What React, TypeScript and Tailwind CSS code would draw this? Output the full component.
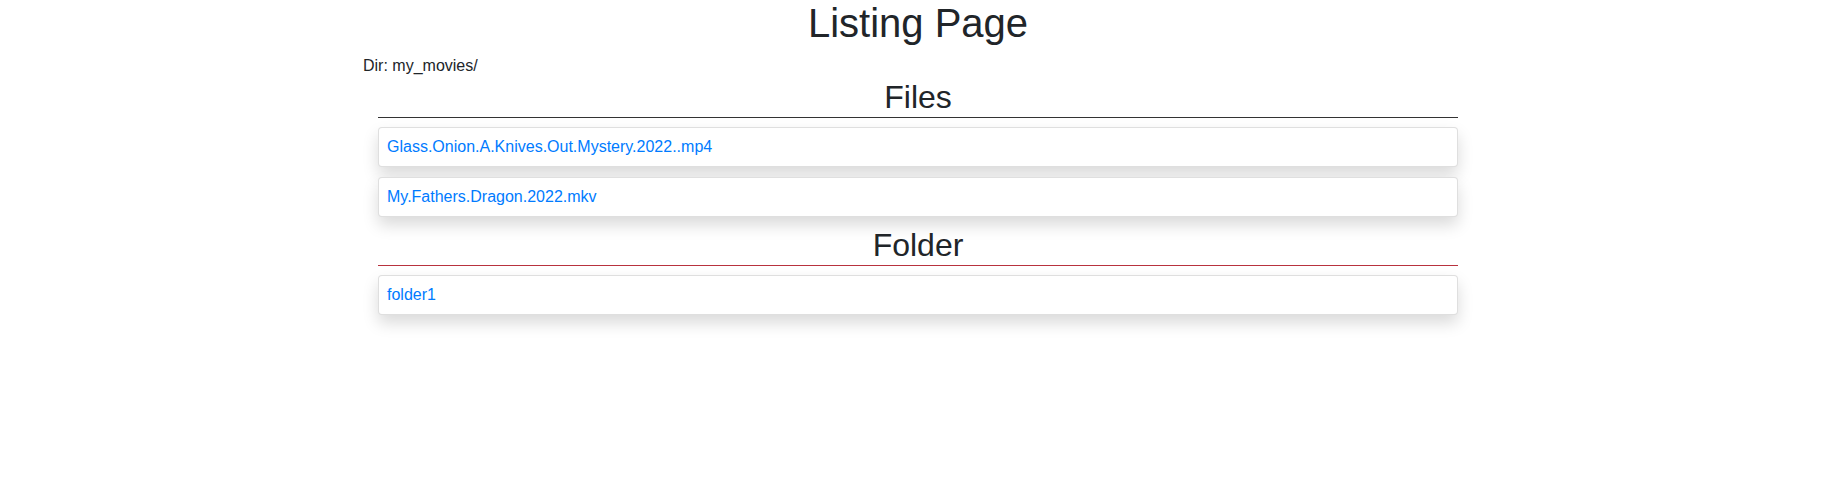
const files = ["Glass.Onion.A.Knives.Out.Mystery.2022..mp4", "My.Fathers.Dragon.2022.mkv"];
const folders = ["folder1"];

function Item({ name }: { name: string }) {
  return (
    <div className="h-[40px] flex items-center px-2 bg-white border border-[rgba(0,0,0,0.125)] rounded-[4px] shadow-[0_8px_16px_rgba(0,0,0,0.15)]">
      <a href="#" className="text-[#007bff] text-base leading-6 no-underline">
        {name}
      </a>
    </div>
  );
}

function Section({
  title,
  items,
  lineColor,
  className,
}: {
  title: string;
  items: string[];
  lineColor: string;
  className?: string;
}) {
  return (
    <div className={`mx-[15px] ${className ?? ""}`}>
      <h2 className="text-[32px] leading-[38px] text-center font-normal text-[#212529]">
        {title}
      </h2>
      <div className={`mt-[1px] h-px ${lineColor}`}></div>
      <div className="mt-[9px] flex flex-col gap-[10px]">
        {items.map((item, index) => (
          <Item key={index} name={item} />
        ))}
      </div>
    </div>
  );
}

export default function App() {
  return (
    <div
      className="w-full min-h-[497px] bg-white pl-[5px] text-[#212529]"
      style={{ fontFamily: '"Liberation Sans", Arial, sans-serif' }}
    >
      <div className="w-[1110px] mx-auto">
        <h1 className="text-[40px] leading-[46px] text-center font-normal mb-[8px]">
          Listing Page
        </h1>
        <div className="text-base leading-6">Dir: my_movies/</div>
        <Section title="Files" items={files} lineColor="bg-[#333333]" />
        <Section
          title="Folder"
          items={folders}
          lineColor="bg-[#b8323e]"
          className="mt-[9px]"
        />
      </div>
    </div>
  );
}
